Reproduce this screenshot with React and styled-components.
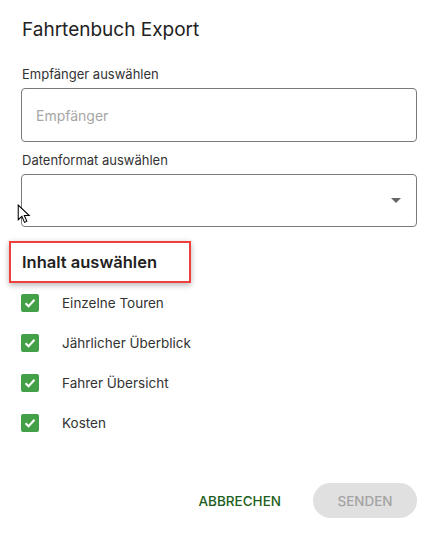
import React from 'react';
import styled, { createGlobalStyle } from 'styled-components';

const GlobalStyle = createGlobalStyle`
  body {
    margin: 0;
    background: #fff;
    font-family: Inter, "Noto Sans", "Liberation Sans", sans-serif;
    color: #222;
  }
`;

// Styled Components
const Dialog = styled.div`
  position: relative;
  width: 438px;
  height: 537px;
  box-sizing: border-box;
  padding: 18px 21px 0 21px;
  display: flex;
  flex-direction: column;
`;

const Title = styled.h2`
  margin: 0 0 0 1px;
  font-size: 19px;
  line-height: 24px;
  font-weight: 400;
  color: #222;
`;

const Label = styled.label`
  display: block;
  margin: ${(p) => p.$top}px 0 0 1px;
  font-size: 13px;
  line-height: 16px;
  color: #333;
`;

const Box = styled.div`
  box-sizing: border-box;
  margin-top: 6px;
  height: ${(p) => p.$height}px;
  border: 1px solid #7a7a7a;
  border-radius: 4px;
  display: flex;
  align-items: center;
  justify-content: space-between;
  padding: 0 14px;
`;

const Placeholder = styled.span`
  font-size: 14px;
  color: #a6a6a6;
`;

const Arrow = styled.span`
  width: 0;
  height: 0;
  margin-right: 1px;
  border-left: 5px solid transparent;
  border-right: 5px solid transparent;
  border-top: 5px solid #666;
`;

const Highlight = styled.div`
  box-sizing: border-box;
  margin: 14px 0 0 -12px;
  width: 182px;
  height: 42px;
  border: 2px solid #ee3e3e;
  box-shadow: 0 2px 6px rgba(0, 0, 0, 0.3);
  display: flex;
  align-items: center;
  padding-left: 11px;
`;

const SectionTitle = styled.h3`
  margin: 0;
  font-size: 16.5px;
  font-weight: 600;
  color: #222;
`;

const List = styled.div`
  display: flex;
  flex-direction: column;
`;

const Row = styled.label`
  height: 40px;
  display: flex;
  align-items: center;
  gap: 23px;
  font-size: 13.5px;
  color: #333;
`;

const Check = styled.span`
  width: 18px;
  height: 18px;
  border-radius: 2px;
  background: #43a047;
  display: flex;
  align-items: center;
  justify-content: center;
`;

const Footer = styled.div`
  margin-top: 40px;
  display: flex;
  justify-content: flex-end;
  align-items: center;
  gap: 24px;
`;

const TextButton = styled.button`
  border: none;
  background: none;
  padding: 8px;
  font-family: inherit;
  font-size: 13.5px;
  font-weight: 500;
  color: #1b5e20;
  cursor: pointer;
`;

const PillButton = styled.button`
  width: 104px;
  height: 35px;
  border: none;
  border-radius: 18px;
  background: #e0e0e0;
  color: #a3a3a3;
  font-family: inherit;
  font-size: 13.5px;
  font-weight: 500;
  cursor: not-allowed;
`;

const Cursor = styled.svg`
  position: absolute;
  left: 17px;
  top: 204px;
`;

const items = ['Einzelne Touren', 'Jährlicher Überblick', 'Fahrer Übersicht', 'Kosten'];

const App = () => {
  return (
    <>
      <GlobalStyle />
      <Dialog>
        <Title>Fahrtenbuch Export</Title>
        <Label $top={24}>Empfänger auswählen</Label>
        <Box $height={54}>
          <Placeholder>Empfänger</Placeholder>
        </Box>
        <Label $top={10}>Datenformat auswählen</Label>
        <Box $height={53}>
          <span />
          <Arrow />
        </Box>
        <Highlight>
          <SectionTitle>Inhalt auswählen</SectionTitle>
        </Highlight>
        <List>
          {items.map((item) => (
            <Row key={item}>
              <Check>
                <svg width="14" height="14" viewBox="0 0 14 14">
                  <path d="M2.5 7.2 L5.6 10.2 L11.5 3.8" fill="none" stroke="#fff" strokeWidth="2" />
                </svg>
              </Check>
              {item}
            </Row>
          ))}
        </List>
        <Footer>
          <TextButton>ABBRECHEN</TextButton>
          <PillButton disabled>SENDEN</PillButton>
        </Footer>
        <Cursor width="14" height="21" viewBox="0 0 13 20">
          <path d="M1 1 L1 15 L4.5 11.8 L7 17.5 L9.2 16.5 L6.8 11 L11.5 11 Z" fill="#fff" stroke="#000" strokeWidth="1" />
        </Cursor>
      </Dialog>
    </>
  );
};

export default App;
